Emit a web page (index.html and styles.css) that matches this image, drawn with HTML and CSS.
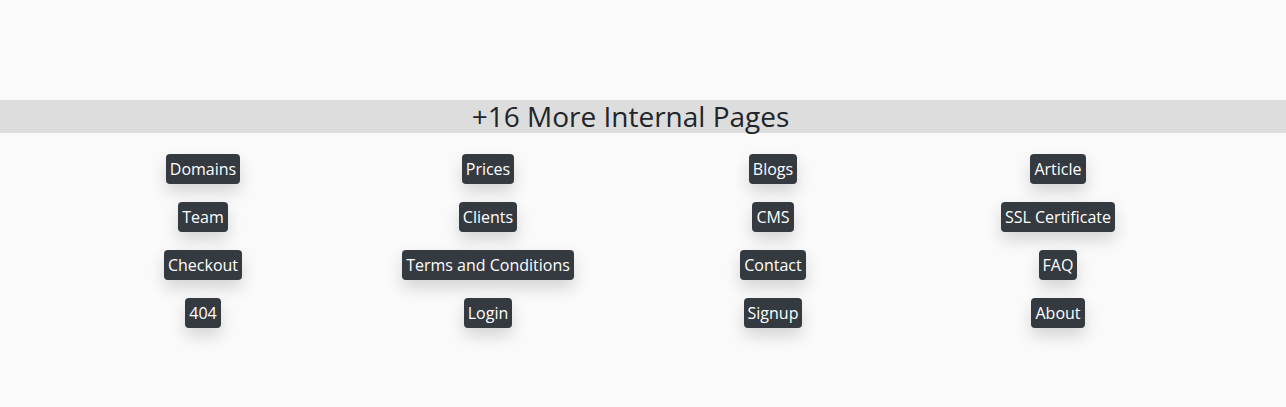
FILE: index.html
```html
<!DOCTYPE html>
<html lang="en">
<head>
<meta charset="utf-8">
<title>Internal Pages</title>
<link rel="stylesheet" href="styles.css">
</head>
<body>
<section class="pages">
  <h2 class="band"><span class="band-text">+16 More Internal Pages</span></h2>
  <div class="grid">
    <div class="cell"><a class="btn" href="#">Domains</a></div>
    <div class="cell"><a class="btn" href="#">Prices</a></div>
    <div class="cell"><a class="btn" href="#">Blogs</a></div>
    <div class="cell"><a class="btn" href="#">Article</a></div>
    <div class="cell"><a class="btn" href="#">Team</a></div>
    <div class="cell"><a class="btn" href="#">Clients</a></div>
    <div class="cell"><a class="btn" href="#">CMS</a></div>
    <div class="cell"><a class="btn" href="#">SSL Certificate</a></div>
    <div class="cell"><a class="btn" href="#">Checkout</a></div>
    <div class="cell"><a class="btn" href="#">Terms and Conditions</a></div>
    <div class="cell"><a class="btn" href="#">Contact</a></div>
    <div class="cell"><a class="btn" href="#">FAQ</a></div>
    <div class="cell"><a class="btn" href="#">404</a></div>
    <div class="cell"><a class="btn" href="#">Login</a></div>
    <div class="cell"><a class="btn" href="#">Signup</a></div>
    <div class="cell"><a class="btn" href="#">About</a></div>
  </div>
</section>
</body>
</html>
```
FILE: styles.css
```css
html, body {
  margin: 0;
  padding: 0;
  background: #fafafa;
  font-family: "Open Sans", "Noto Sans", sans-serif;
}
.pages {
  padding: 100px 0 79px;
}
.band {
  margin: 0;
  background: #dddddd;
  height: 33px;
  line-height: 33px;
  font-size: 28px;
  font-weight: 400;
  color: #212529;
  text-align: center;
  padding-right: 25px;
}
.grid {
  width: 1140px;
  margin: 21px 0 0 60.5px;
  display: grid;
  grid-template-columns: repeat(4, 285px);
  row-gap: 18px;
}
.cell {
  display: flex;
  justify-content: center;
}
.btn {
  display: inline-block;
  background: #343a40;
  color: #ffffff;
  text-decoration: none;
  font-size: 16px;
  line-height: 22px;
  padding: 4px 4px;
  border-radius: 4px;
  box-shadow: 0 8px 16px rgba(0, 0, 0, 0.15);
}
```
